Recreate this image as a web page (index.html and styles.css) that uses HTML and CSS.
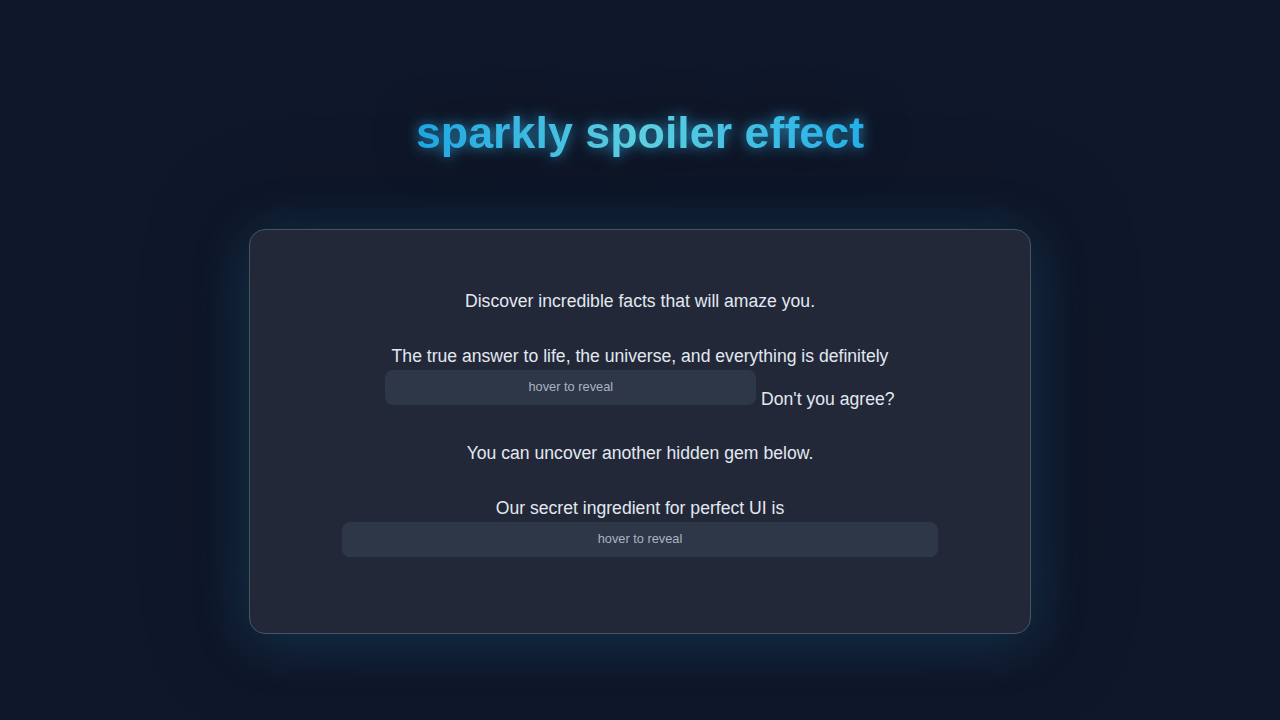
FILE: index.html
```html
<!DOCTYPE html>
<html lang="en">
<head>
  <meta charset="UTF-8" />
  <meta name="viewport" content="width=device-width, initial-scale=1.0"/>
  <title>Sparkly Spoiler Effect</title>
  <link rel="stylesheet" href="styles.css">
</head>
<body>
  <h1 class="title">sparkly spoiler effect</h1>

  <!-- Card holding the text with hidden spoilers -->
  <div class="card">
    <p>Discover incredible facts that will amaze you.</p>
    <p>
      The true answer to life, the universe, and everything is definitely
      <span class="spoiler"><span class="secret">forty-two, as every good hitchhiker knows</span><span class="hint">hover to reveal</span></span>
      Don't you agree?
    </p>
    <p>You can uncover another hidden gem below.</p>
    <p>
      Our secret ingredient for perfect UI is
      <span class="spoiler wide"><span class="secret">a pinch of stardust, a dash of patience and a whole lot of true curiosity</span><span class="hint">hover to reveal</span></span>
    </p>
  </div>
</body>
</html>
```

FILE: styles.css
```css
/* Basic Reset */
* {
  margin: 0;
  padding: 0;
  box-sizing: border-box;
}

body {
  font-family: "Liberation Sans", Arial, sans-serif;
  background-color: #0f172a;
  color: #e2e8f0;
  min-height: 100vh;
  display: flex;
  flex-direction: column;
  align-items: center;
  padding-top: 106px;
}

/* Glowing gradient heading */
.title {
  font-size: 2.8rem;
  line-height: 1.2;
  font-weight: bold;
  background: linear-gradient(90deg, #1ea6e3, #5dcfe0 50%, #24afe8);
  -webkit-background-clip: text;
  background-clip: text;
  color: transparent;
  filter: drop-shadow(0 0 7px rgba(56, 189, 248, 0.7)) drop-shadow(0 0 24px rgba(0, 0, 0, 0.45));
  margin-bottom: 69px;
}

/* Main card */
.card {
  width: 782px;
  background-color: #232839;
  border: 1px solid #4a5264;
  border-radius: 16px;
  padding: 31px 40px 41px;
  text-align: center;
  box-shadow: 0 6px 60px rgba(56, 189, 248, 0.2), 0 0 110px rgba(0, 0, 0, 0.25);
}

.card p {
  font-size: 1.1rem;
  line-height: 1.6;
  margin: 1.5em 0;
}

/* Spoiler block: secret text keeps its width but stays hidden under the hint */
.spoiler {
  display: inline-block;
  position: relative;
  overflow: hidden;
  padding: 3.5px 24px;
  border-radius: 8px;
  background-color: #2e3748;
  cursor: pointer;
}

.spoiler.wide {
  padding: 3.5px 26px;
}

.spoiler .secret {
  visibility: hidden;
  color: #38bdf8;
}

.spoiler .hint {
  position: absolute;
  inset: 0;
  display: flex;
  align-items: center;
  justify-content: center;
  font-size: 0.8rem;
  color: #a9b3c1;
  transition: opacity 0.3s ease;
}

.spoiler:hover {
  background-color: transparent;
}

.spoiler:hover .secret {
  visibility: visible;
}

.spoiler:hover .hint {
  opacity: 0;
}
```
